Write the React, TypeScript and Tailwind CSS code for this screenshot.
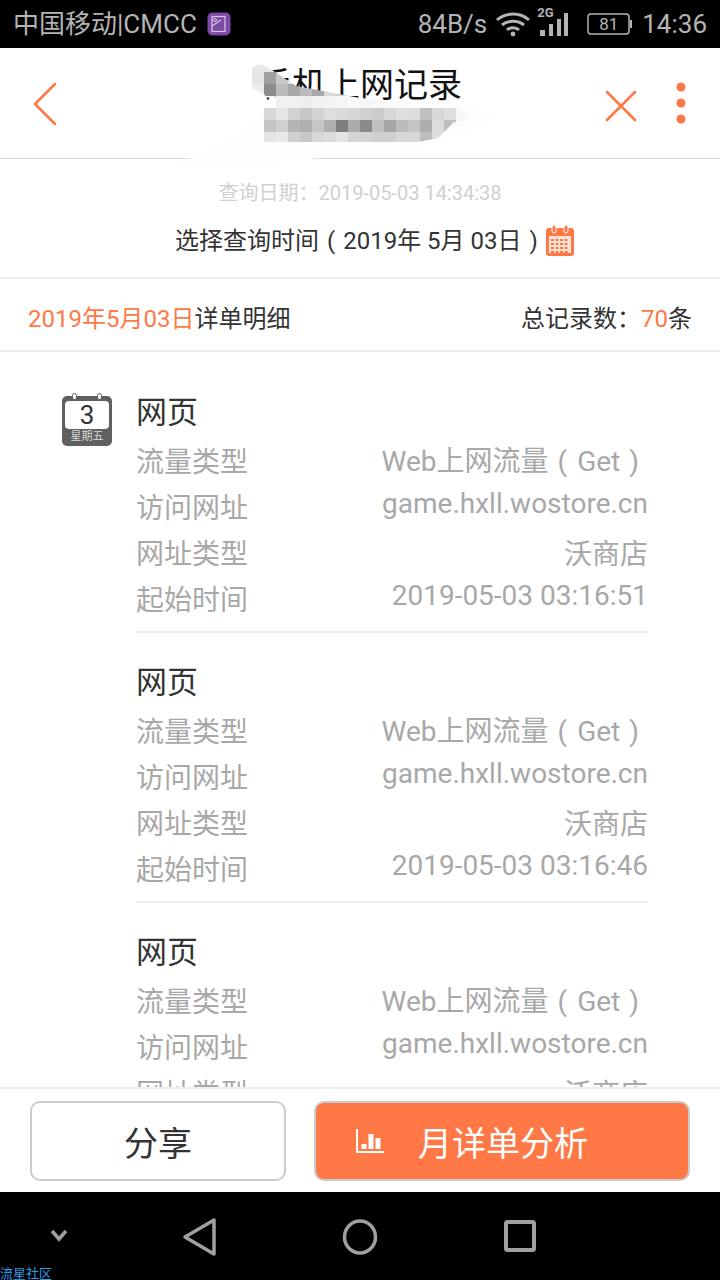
const FONT = "font-['Roboto','Noto_Sans_CJK_SC',sans-serif]";

const mosaic = [
  { y: 108, x: 264, c: ["#d8d8d8", "#e6e6e6", "#d2d2d2", "#c8c8c8", "#d4d4d4", "#dedede", "#dadada", "#d6d6d6", "#d0d0d0", "#cccccc", "#d8d8d8", "#dedede", "#dcdcdc", "#c0c0c0", "#d8d8d8", "#dedede", "#f6f6f6"] },
  { y: 120, x: 264, c: ["#c4c4c4", "#d0d0d0", "#b4b4b4", "#b0b0b0", "#c6c6c6", "#b0b0b0", "#7e7e7e", "#aaaaaa", "#8a8a8a", "#c0c0c0", "#a6a6a6", "#bcbcbc", "#c4c4c4", "#aeaeae", "#dcdcdc", "#bebebe", "#f8f8f8"] },
  { y: 132, x: 264, c: ["#e4e4e4", "#e8e8e8", "#d0d0d0", "#c8c8c8", "#d8d8d8", "#dcdcdc", "#e4e4e4", "#d4d4d4", "#d4d4d4", "#d0d0d0", "#d0d0d0", "#d8d8d8", "#d8d8d8", "#bebebe", "#dcdcdc", "#e8e8e8"] },
  { y: 64, x: 252, c: ["#e8e8e8", "#e8e8e8"] },
  { y: 72, x: 252, c: ["#e6e6e6", "#a0a0a0", "#c8c8c8", "#e0e0e0"] },
  { y: 84, x: 252, c: ["#ececec", "#8c8c8c", "#bcbcbc", "#a8a8a8", "#bcbcbc", "#a8a8a8", "#d8d8d8", "#d0d0d0"] },
  { y: 96, x: 276, c: ["#f0f0f0", "#f0f0f0", "#eeeeee", "#f2f2f2", "#f4f4f4", "#f6f6f6", "#f8f8f8", "#f6f6f6", "#f8f8f8", "#fafafa", "#fafafa", "#fbfbfb"] },
];

function StatusBar() {
  return (
    <div className="flex h-12 shrink-0 items-center justify-between bg-black pl-[13px] pr-[13px] text-[26px] text-[#b4b4b4]">
      <div className="flex items-center gap-[10px]">
        <span>中国移动|CMCC</span>
        <svg width="24" height="24" viewBox="0 0 24 24">
          <rect width="23" height="23" x="0.5" y="0.5" rx="5" fill="#7d4aa8" />
          <rect x="5" y="4.5" width="13" height="15" fill="none" stroke="#d8c8e8" strokeWidth="1.2" />
          <path d="M5 14l9-6" stroke="#d8c8e8" strokeWidth="1.2" />
          <circle cx="8" cy="8" r="1.5" fill="none" stroke="#d8c8e8" />
        </svg>
      </div>
      <div className="flex items-center">
        <span>84B/s</span>
        <svg className="ml-[9px]" width="34" height="26" viewBox="0 0 34 26" fill="none" stroke="#b4b4b4" strokeWidth="3">
          <path d="M1 9c9-8 23-8 32 0" />
          <path d="M6 14c6-5 16-5 22 0" />
          <path d="M11 19c3-3 9-3 12 0" />
          <circle cx="17" cy="23" r="2.4" fill="#b4b4b4" stroke="none" />
        </svg>
        <div className="relative ml-[7px] h-9 w-[32px]">
          <span className="absolute left-0 top-0 text-[13px] font-bold leading-[14px]">2G</span>
          <svg className="absolute left-0 top-0" width="32" height="36" viewBox="0 0 32 36" fill="#b4b4b4">
            <rect x="3" y="24" width="5" height="6" />
            <rect x="12" y="18" width="4" height="12" />
            <rect x="20" y="13" width="4" height="17" />
            <rect x="27" y="7" width="4" height="23" />
          </svg>
        </div>
        <div className="relative ml-[18px] h-[22px] w-[45px]">
          <svg className="absolute left-0 top-0" width="45" height="22" viewBox="0 0 45 22" fill="none">
            <rect x="1" y="1" width="41" height="20" rx="3" stroke="#b4b4b4" strokeWidth="1.5" />
            <rect x="43" y="7" width="2" height="8" fill="#b4b4b4" />
          </svg>
          <span className="absolute left-[12px] top-0 text-[17px] leading-[22px]">81</span>
        </div>
        <span className="ml-[10px]">14:36</span>
      </div>
    </div>
  );
}

function Header() {
  return (
    <div className="relative flex h-[111px] shrink-0 items-start justify-between border-b border-[#dcdcdc] bg-white pt-[34px]">
      <svg className="ml-[33px]" width="24" height="44" viewBox="0 0 24 44" fill="none" stroke="#ff7845" strokeWidth="2.6" strokeLinecap="round" strokeLinejoin="round">
        <path d="M22 2L2 22l20 20" />
      </svg>
      <div className="absolute left-0 right-0 top-[17px] text-center text-[34px] leading-[40px] text-[#111]">手机上网记录</div>
      <div className="mr-[34px] flex items-center gap-[39px]">
        <svg className="mt-[5px]" width="32" height="32" viewBox="0 0 32 32" fill="none" stroke="#ff7845" strokeWidth="2.6" strokeLinecap="round">
          <path d="M2 2l28 28M30 2L2 30" />
        </svg>
        <svg width="10" height="42" viewBox="0 0 10 42" fill="#ff7845">
          <circle cx="5" cy="5" r="4.5" />
          <circle cx="5" cy="21" r="4.5" />
          <circle cx="5" cy="37" r="4.5" />
        </svg>
      </div>
    </div>
  );
}

function CalendarBadge() {
  return (
    <div className="relative mt-[33px] h-[50px] w-[50px] shrink-0 rounded-[5px] bg-[#606060]">
      <div className="absolute left-1/2 top-[-3px] h-[7px] w-[5px] -translate-x-[15px] rounded-full border border-[#606060] bg-white"></div>
      <div className="absolute left-1/2 top-[-3px] h-[7px] w-[5px] translate-x-[10px] rounded-full border border-[#606060] bg-white"></div>
      <div className="mx-[3px] flex h-[28px] translate-y-[5px] items-center justify-center rounded-[4px] bg-white text-[26px] leading-none text-[#333]">3</div>
      <div className="mt-[6px] text-center text-[11px] leading-[14px] text-[#d8d8d8]">星期五</div>
    </div>
  );
}

function Record({ time, last }: { time: string; last?: boolean }) {
  return (
    <div className={last ? "pt-[28px]" : "border-b-2 border-[#eeeeee] pb-[7px] pt-[28px]"}>
      <div className="mb-[5px] text-[31px] leading-[44px] text-[#333]">网页</div>
      <div className="flex h-[46px] items-center justify-between text-[28px] text-[#a8a8a8]">
        <span>流量类型</span>
        <span className="-translate-y-[1px]">
          Web上网流量<span className="ml-[9px] mr-[10px]">(</span>Get<span className="ml-[9px] mr-[9px]">)</span>
        </span>
      </div>
      <div className="flex h-[46px] items-center justify-between text-[28px] text-[#a8a8a8]">
        <span>访问网址</span>
        <span className="-translate-y-[5px]">game.hxll.wostore.cn</span>
      </div>
      <div className="flex h-[46px] items-center justify-between text-[28px] text-[#a8a8a8]">
        <span>网址类型</span>
        <span>沃商店</span>
      </div>
      <div className="flex h-[46px] items-center justify-between text-[28px] text-[#a8a8a8]">
        <span>起始时间</span>
        <span className="-translate-y-[5px]">{time}</span>
      </div>
    </div>
  );
}

function Mosaic() {
  return (
    <svg className="absolute left-0 top-0" width="720" height="180" viewBox="0 0 720 180">
      <defs>
        <clipPath id="blur-edge">
          <path d="M252 68q6-6 14-2l30 20 64 12 100 8 8 16-14 0-16 16-20 4H264v-32q0-6 6-8l-6-8-12-6z" />
        </clipPath>
      </defs>
      <path d="M270 96l190 8 40 14-70 26-130 16-130 8 60-28 30-22z" fill="#fdfdfd" />
      <g clipPath="url(#blur-edge)">
        {mosaic.map((row) =>
          row.c.map((color, i) => <rect key={row.y + "-" + i} x={row.x + i * 12} y={row.y} width="12" height="12" fill={color} />),
        )}
      </g>
    </svg>
  );
}

function BottomBar() {
  return (
    <div className="relative flex h-[105px] shrink-0 items-center justify-between border-t-2 border-[#eeeeee] bg-white px-[30px]">
      <button className="h-20 w-[256px] rounded-[10px] border-2 border-[#cccccc] pt-[6px] text-[34px] leading-[44px] text-[#333]">分享</button>
      <button className="flex h-20 w-[376px] items-center rounded-[10px] border-2 border-[#cccccc] bg-[#ff7845] pl-[40px] text-[34px] leading-[44px] text-white">
        <svg width="28" height="24" viewBox="0 0 28 24" fill="none" stroke="white" strokeWidth="2">
          <path d="M1 0v23h27" />
          <path d="M8 20v-5M15 20V5M22 20V9" strokeWidth="5" />
        </svg>
        <span className="ml-[34px] pt-[6px]">月详单分析</span>
      </button>
    </div>
  );
}

function NavBar() {
  return (
    <div className="relative flex h-[88px] shrink-0 items-start bg-black">
      <svg className="absolute left-[50px] top-[37px]" width="18" height="13" viewBox="0 0 18 13" fill="none" stroke="#a0a0a0" strokeWidth="3.5">
        <path d="M2 2l7 8 7-8" />
      </svg>
      <svg className="absolute left-[182px] top-[25px]" width="36" height="40" viewBox="0 0 36 40" fill="none" stroke="#a0a0a0" strokeWidth="3.5" strokeLinejoin="round">
        <path d="M32 3v34L3 20z" />
      </svg>
      <svg className="absolute left-[342px] top-[26px]" width="36" height="38" viewBox="0 0 36 38" fill="none" stroke="#a0a0a0" strokeWidth="3.5">
        <ellipse cx="18" cy="19" rx="15.5" ry="16" />
      </svg>
      <svg className="absolute left-[503px] top-[27px]" width="34" height="34" viewBox="0 0 34 34" fill="none" stroke="#a0a0a0" strokeWidth="4">
        <rect x="3" y="3" width="28" height="28" rx="1.5" />
      </svg>
      <span className="absolute bottom-[-1px] left-0 text-[13px] leading-[14px] text-[#2f9be8]">流星社区</span>
    </div>
  );
}

export default function App() {
  return (
    <div className={`relative flex h-[1280px] w-[720px] flex-col overflow-hidden bg-white ${FONT}`}>
      <StatusBar />
      <Header />
      <div className="flex h-[120px] shrink-0 flex-col items-center border-b-2 border-[#eeeeee] pt-[22px]">
        <div className="text-[20px] leading-6 text-[#d0d0d0]">查询日期：2019-05-03 14:34:38</div>
        <div className="mt-[16px] flex items-center self-start pl-[175px] text-[24px] leading-[40px] text-[#333]">
          <span>
            选择查询时间<span className="mx-[8px]">(</span>2019年 5月 03日<span className="ml-[8px]">)</span>
          </span>
          <svg className="ml-[8px] -translate-y-[1px]" width="28" height="31" viewBox="0 0 28 31">
            <rect x="0" y="3" width="28" height="28" rx="3" fill="#ff7845" />
            <rect x="6" y="0" width="4" height="8" rx="2" fill="#ff7845" stroke="white" strokeWidth="1" />
            <rect x="18" y="0" width="4" height="8" rx="2" fill="#ff7845" stroke="white" strokeWidth="1" />
            <rect x="3" y="11" width="22" height="17" fill="#ffe4d8" />
            <path d="M5 15h18M5 19h18M5 23h18M5 27h18" stroke="#ff7845" strokeWidth="2" strokeDasharray="3 1.5" />
          </svg>
        </div>
      </div>
      <div className="flex h-[73px] shrink-0 items-center justify-between border-b-2 border-[#eeeeee] px-[28px] pt-[8px] text-[24px] text-[#333]">
        <div>
          <span className="text-[#ff7845]">2019年5月03日</span>详单明细
        </div>
        <div>
          总记录数：<span className="text-[#ff7845]">70</span>条
        </div>
      </div>
      <div className="flex min-h-0 flex-1 overflow-hidden pl-[62px] pr-[72px] pt-[11px]">
        <CalendarBadge />
        <div className="ml-[24px] flex-1">
          <Record time="2019-05-03 03:16:51" />
          <Record time="2019-05-03 03:16:46" />
          <Record time="2019-05-03 03:16:46" last />
        </div>
      </div>
      <BottomBar />
      <NavBar />
      <Mosaic />
    </div>
  );
}
